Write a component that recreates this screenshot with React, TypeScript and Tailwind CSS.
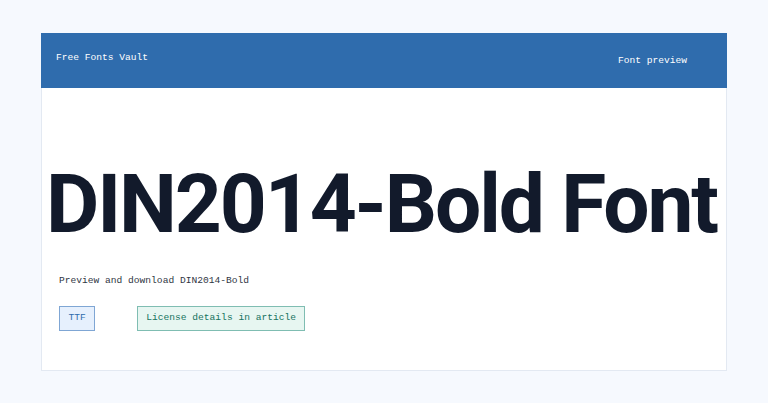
export default function App() {
  return (
    <div className="min-h-[403px] bg-[#f6f9fe] px-[41px] pt-[33px] font-['Liberation_Mono',monospace]">
      <div className="w-[686px] border border-[#e3e9f2] bg-white">
        <header className="-mx-px -mt-px flex h-[55px] items-center justify-between bg-[#2f6cad] pl-[15px] pr-[40px] text-[9.6px] text-white">
          <span className="-mt-[5px]">Free Fonts Vault</span>
          <nav className="-mb-[1px]">Font preview</nav>
        </header>
        <div className="px-[17px] pb-[39px] pt-[75px]">
          <h1 className="-ml-[13px] whitespace-nowrap font-['Roboto',sans-serif] text-[82px] font-bold leading-[82px] tracking-[-2.1px] text-[#121a2b]">
            DIN2014-Bold Font
          </h1>
          <p className="mt-[29px] text-[9.6px] text-[#2f3644]">Preview and download DIN2014-Bold</p>
          <div className="mt-[18px] flex items-center gap-[42px]">
            <span className="border border-[#7fa6d4] bg-[#e6f0fd] px-[8.5px] py-[4px] text-[9.6px] text-[#2f6cad]">TTF</span>
            <span className="border border-[#7fbdb2] bg-[#e7f6f1] px-[8px] py-[4px] text-[9.6px] text-[#16735f]">
              License details in article
            </span>
          </div>
        </div>
      </div>
    </div>
  );
}
